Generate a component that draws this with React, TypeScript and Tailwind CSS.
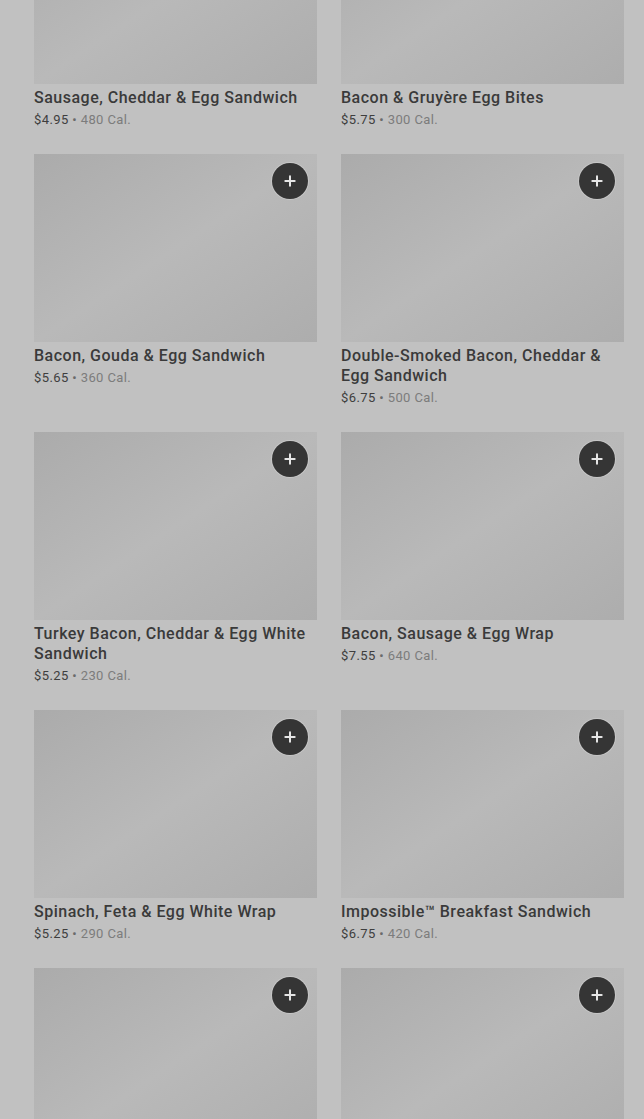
import { Plus } from "lucide-react";

type Item = { name: string; price: string; cal: string };

const items: Item[] = [
  { name: "Sausage, Cheddar & Egg Sandwich", price: "$4.95", cal: "480 Cal." },
  { name: "Bacon & Gruyère Egg Bites", price: "$5.75", cal: "300 Cal." },
  { name: "Bacon, Gouda & Egg Sandwich", price: "$5.65", cal: "360 Cal." },
  { name: "Double-Smoked Bacon, Cheddar & Egg Sandwich", price: "$6.75", cal: "500 Cal." },
  { name: "Turkey Bacon, Cheddar & Egg White Sandwich", price: "$5.25", cal: "230 Cal." },
  { name: "Bacon, Sausage & Egg Wrap", price: "$7.55", cal: "640 Cal." },
  { name: "Spinach, Feta & Egg White Wrap", price: "$5.25", cal: "290 Cal." },
  { name: "Impossible™ Breakfast Sandwich", price: "$6.75", cal: "420 Cal." },
  { name: "", price: "", cal: "" },
  { name: "", price: "", cal: "" },
];

function Card({ item, first }: { item: Item; first: boolean }) {
  return (
    <div className="flex flex-col">
      <div className="relative h-[188px] bg-gradient-to-br from-[#ababab] via-[#b9b9b9] to-[#adadad]">
        {!first && (
          <button className="absolute top-[9px] right-[9px] w-9 h-9 rounded-full bg-[#353535] ring-1 ring-[#d0d0d0]/60 flex items-center justify-center">
            <Plus className="w-4 h-4 text-[#e6e6e6]" strokeWidth={3} />
          </button>
        )}
      </div>
      {item.name && (
        <div className="pt-[4px]">
          <h3 className="text-[16px] leading-5 font-medium text-[#3a3a3a] tracking-[0.5px]">{item.name}</h3>
          <p className="mt-[2px] text-[13px] leading-5 tracking-[0.4px]">
            <span className="text-[#3e3e3e]">{item.price}</span>
            <span className="text-[#6a6a6a]"> • </span>
            <span className="text-[#7c7c7c]">{item.cal}</span>
          </p>
        </div>
      )}
    </div>
  );
}

export default function App() {
  return (
    <div
      className="min-h-[1119px] bg-[#c1c1c1] overflow-hidden"
      style={{ fontFamily: "Roboto, 'Noto Sans', sans-serif" }}
    >
      <div className="px-[34px] pr-[20px] -mt-[104px] grid grid-cols-2 gap-x-6 gap-y-6">
        {items.map((item, i) => (
          <Card key={i} item={item} first={i < 2} />
        ))}
      </div>
    </div>
  );
}
